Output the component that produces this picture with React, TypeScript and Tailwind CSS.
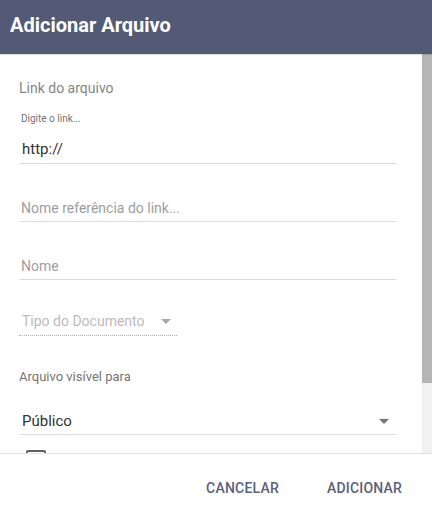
const Arrow = ({ light }: { light?: boolean }) => (
  <svg width="10" height="5" viewBox="0 0 10 5" className="shrink-0">
    <path d="M0 0 L10 0 L5 5 Z" fill={light ? "#a8a8a8" : "#757575"} />
  </svg>
);

const App = () => {
  return (
    <div className="w-[432px] h-[515px] flex flex-col bg-white overflow-hidden font-['Roboto',sans-serif]">
      <div className="h-[54px] shrink-0 bg-[#525a75] pl-[10px] pt-[12px] shadow-[0_1px_1px_rgba(0,0,0,0.12)] z-10">
        <h1 className="text-[20px] leading-[26px] font-bold text-white">Adicionar Arquivo</h1>
      </div>

      <div className="flex flex-1 min-h-0">
        <div className="flex-1 overflow-hidden pl-[19px] pr-[25px] pt-[24px]">
          <div className="text-[14px] leading-[20px] text-[#858585]">Link do arquivo</div>
          <div className="mt-[14px] text-[10px] leading-[14px] text-[#757575] pl-[2px]">Digite o link...</div>
          <div className="pt-[13px] pb-[4px] pl-[3px] border-b border-[#dcdcdc] text-[15px] leading-[20px] text-[#333]">
            http://
          </div>

          <div className="mt-[34px] pb-[3px] pl-[2px] border-b border-[#dcdcdc] text-[14px] leading-[20px] text-[#9e9e9e]">
            Nome referência do link...
          </div>

          <div className="mt-[34px] pb-[3px] pl-[2px] border-b border-[#dcdcdc] text-[14px] leading-[20px] text-[#9e9e9e]">
            Nome
          </div>

          <div className="mt-[31px] w-[158px] flex items-center justify-between pb-[4px] pl-[3px] pr-[6px] border-b border-dotted border-[#b0b0b0] text-[14px] leading-[20px] text-[#bbbbbb]">
            <span>Tipo do Documento</span>
            <Arrow light />
          </div>

          <div className="mt-[32px] text-[13px] leading-[18px] text-[#757575]">Arquivo visível para</div>

          <div className="mt-[25px] flex items-center justify-between pb-[3px] pl-[3px] pr-[8px] border-b border-[#dcdcdc] text-[15px] leading-[20px] text-[#333]">
            <span>Público</span>
            <Arrow />
          </div>

          <div className="mt-[15px] ml-[7px] w-[20px] h-[20px] rounded-[2px] border-2 border-[#5f5f5f]" />
        </div>

        <div className="w-[10px] shrink-0 flex flex-col bg-[#f1f1f1]">
          <div className="h-[329px] bg-[#b5b5b5]" />
        </div>
      </div>

      <div className="h-[62px] shrink-0 border-t border-[#e0e0e0] flex items-start justify-end pt-[24px] pr-[30px] gap-[48px]">
        <button className="text-[14px] leading-[20px] font-medium tracking-[0.2px] text-[#5a617c]">CANCELAR</button>
        <button className="text-[14px] leading-[20px] font-medium tracking-[0.2px] text-[#5a617c]">ADICIONAR</button>
      </div>
    </div>
  );
};

export default App;
